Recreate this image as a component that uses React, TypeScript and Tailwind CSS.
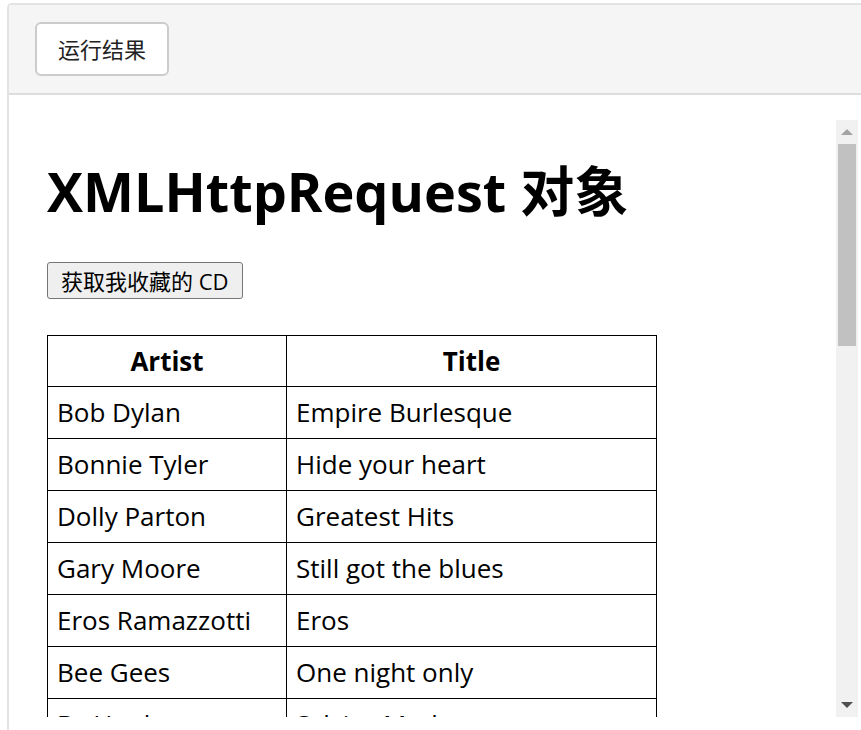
import React from 'react'

const cds = [
  { artist: 'Bob Dylan', title: 'Empire Burlesque' },
  { artist: 'Bonnie Tyler', title: 'Hide your heart' },
  { artist: 'Dolly Parton', title: 'Greatest Hits' },
  { artist: 'Gary Moore', title: 'Still got the blues' },
  { artist: 'Eros Ramazzotti', title: 'Eros' },
  { artist: 'Bee Gees', title: 'One night only' },
  { artist: 'Dr.Hook', title: 'Sylvias Mother' },
  { artist: 'Rod Stewart', title: 'Maggie May' },
]

const font = { fontFamily: '"Open Sans", "Noto Sans CJK SC", sans-serif' }

function Scrollbar() {
  return (
    <div className="flex w-[22px] shrink-0 flex-col bg-[#f1f1f1]">
      <div className="flex h-[24px] items-center justify-center">
        <div className="h-0 w-0 border-x-[6px] border-b-[6px] border-x-transparent border-b-[#a3a3a3]" />
      </div>
      <div className="mx-[2px] h-[202px] bg-[#c1c1c1]" />
      <div className="flex-1" />
      <div className="flex h-[24px] items-center justify-center">
        <div className="h-0 w-0 border-x-[6px] border-t-[6px] border-x-transparent border-t-[#505050]" />
      </div>
    </div>
  )
}

export default function App() {
  return (
    <div className="h-[730px] w-[861px] overflow-hidden bg-white pl-[7px] pt-[3px]" style={font}>
      <div className="flex h-full flex-col rounded-tl-[5px] border-l-2 border-t-2 border-[#e3e3e3]">
        <div className="flex h-[90px] shrink-0 items-center border-b-2 border-[#dddddd] bg-[#f5f5f5] pl-[26px]">
          <button className="h-[54px] w-[134px] rounded-[6px] border-2 border-[#cccccc] bg-white text-[22px] text-[#222]">
            运行结果
          </button>
        </div>
        <div className="flex flex-1 flex-col pl-[26px] pr-[3px] pt-[25px]">
          <div className="flex h-[597px] overflow-hidden">
            <div className="flex-1 overflow-hidden pl-[12px] text-black">
              <h1 className="mt-[38px] text-[54px] font-bold leading-[66px]">XMLHttpRequest 对象</h1>
              <button className="mt-[38px] block h-[37px] rounded-[3px] border border-[#767676] bg-[#efefef] px-[13px] text-[22px] leading-none">
                获取我收藏的 CD
              </button>
              <table className="mt-[36px] border-collapse text-[26px]">
                <thead>
                  <tr className="h-[51px]">
                    <th className="w-[239px] border border-black font-bold">Artist</th>
                    <th className="w-[370px] border border-black font-bold">Title</th>
                  </tr>
                </thead>
                <tbody>
                  {cds.map((cd) => (
                    <tr key={cd.artist} className="h-[52px]">
                      <td className="border border-black px-[9px]">{cd.artist}</td>
                      <td className="border border-black px-[9px]">{cd.title}</td>
                    </tr>
                  ))}
                </tbody>
              </table>
            </div>
            <Scrollbar />
          </div>
        </div>
      </div>
    </div>
  )
}
